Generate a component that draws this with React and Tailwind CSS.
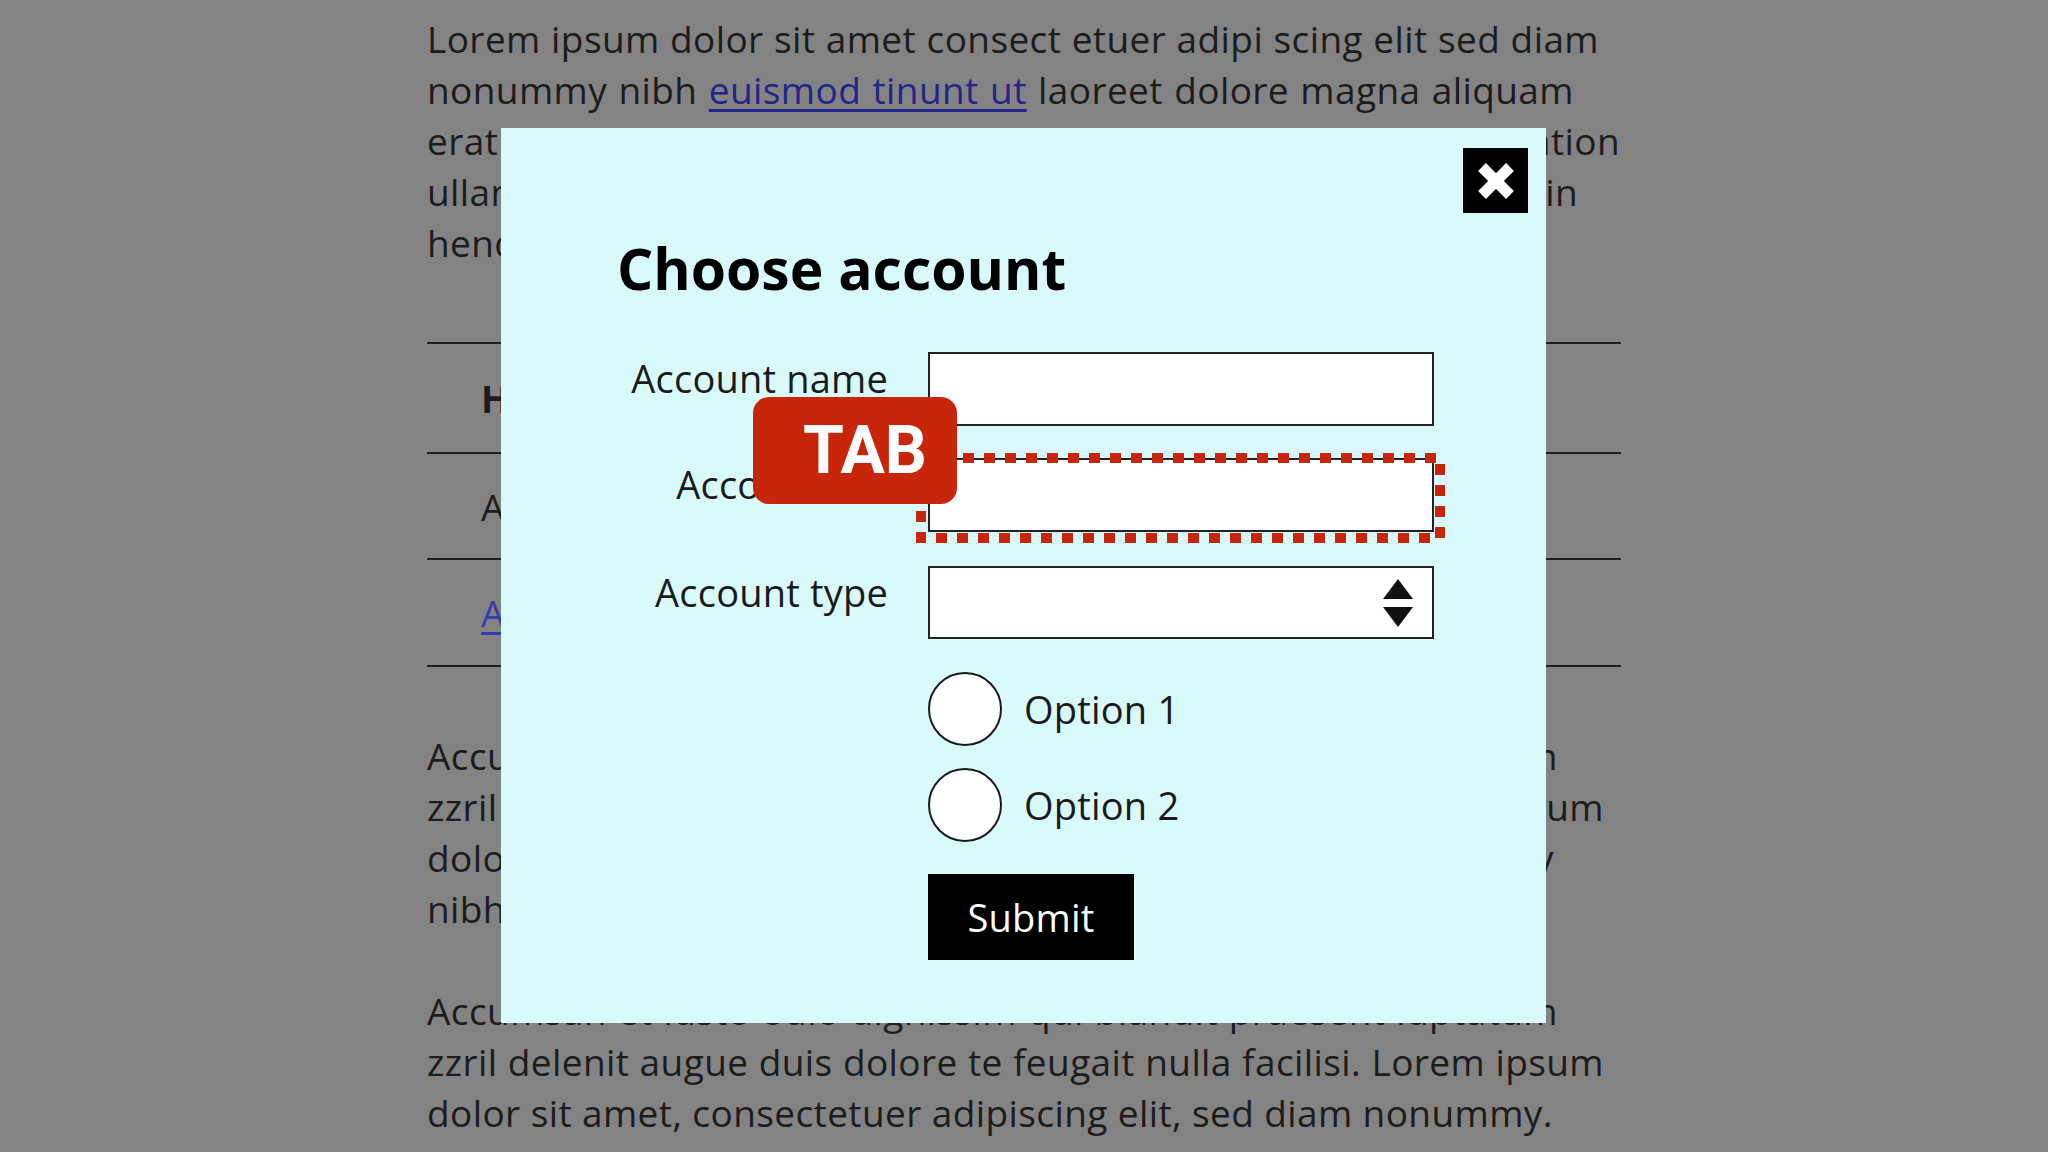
import React from "react";

const line = "whitespace-nowrap [text-align-last:justify]";

function CloseIcon() {
  return (
    <svg viewBox="0 0 40 40" className="h-[40px] w-[40px]">
      <path d="M6 6 L34 34 M34 6 L6 34" stroke="white" strokeWidth="11" strokeLinecap="butt" />
    </svg>
  );
}

function SelectArrows() {
  return (
    <svg viewBox="0 0 30 48" className="h-[48px] w-[30px]">
      <polygon points="15,0 30,20 0,20" fill="#111" />
      <polygon points="0,28 30,28 15,48" fill="#111" />
    </svg>
  );
}

function Radio({ label }) {
  return (
    <label className="flex items-center gap-[22px]">
      <span className="h-[74px] w-[74px] rounded-full border-2 border-[#1a1a1a] bg-white" />
      <span className="leading-none">{label}</span>
    </label>
  );
}

export default function App() {
  return (
    <div className="relative h-[1152px] w-full overflow-hidden bg-[#838383] font-['Open_Sans',sans-serif] text-[#1c1c1c]">
      {/* page behind the dialog */}
      <div className="pl-[427px] pt-[13px] text-[37px] leading-[51px] tracking-[0.4px]">
        <p className={`w-[1172px] ${line}`}>Lorem ipsum dolor sit amet consect etuer adipi scing elit sed diam</p>
        <p className={`w-[1147px] ${line}`}>
          nonummy nibh <a className="text-[#23238c] underline underline-offset-[5px]">euismod tinunt ut</a> laoreet dolore magna aliquam
        </p>
        <p className={`w-[1193px] ${line}`}>erat volutpat. Ut wisi enim ad minim veniam, exerci tation</p>
        <p className={`w-[1151px] ${line}`}>ullamcorper suscipit lobortis nisl ut aliquip ex ea in</p>
        <p className="whitespace-nowrap">hendrerit in vulputate velit esse molestie.</p>

        <div className="mt-[74px] w-[1194px] border-b-2 border-[#1e1e1e]">
          <div className="flex h-[110px] items-center border-t-2 border-[#1e1e1e] pl-[54px] font-bold">Heading</div>
          <div className="flex h-[106px] items-center border-t-2 border-[#1e1e1e] pl-[54px]">Account</div>
          <div className="flex h-[107px] items-center border-t-2 border-[#1e1e1e] pl-[54px]">
            <a className="text-[#3a3ab0] underline underline-offset-[5px]">Account link</a>
          </div>
        </div>

        <div className="mt-[63px]">
          <p className={`w-[1131px] ${line}`}>Accumsan et iusto odio dignissim qui blandit praesent luptatum</p>
          <p className={`w-[1177px] ${line}`}>zzril delenit augue duis dolore te feugait nulla facilisi. Lorem ipsum</p>
          <p className={`w-[1127px] ${line}`}>dolor sit amet, consectetuer adipiscing elit, sed diam nonummy</p>
          <p className="whitespace-nowrap">nibh euismod tincidunt ut laoreet.</p>
        </div>
        <div className="mt-[51px]">
          <p className={`w-[1131px] ${line}`}>Accumsan et iusto odio dignissim qui blandit praesent luptatum</p>
          <p className={`w-[1177px] ${line}`}>zzril delenit augue duis dolore te feugait nulla facilisi. Lorem ipsum</p>
          <p className="whitespace-nowrap">dolor sit amet, consectetuer adipiscing elit, sed diam nonummy.</p>
        </div>
      </div>

      {/* dialog */}
      <div className="absolute left-[501px] top-[128px] h-[895px] w-[1045px] bg-[#d8fafa] pl-[116px] pt-[112px]">
        <button className="absolute right-[18px] top-[20px] flex h-[65px] w-[65px] items-center justify-center bg-black">
          <CloseIcon />
        </button>

        <h1 className="text-[57px] font-bold leading-none text-black">Choose account</h1>

        <form className="mt-[55px] grid grid-cols-[271px_506px] gap-x-[40px] text-[38px] tracking-[0.2px] text-[#1a1a1a]">
          <span className="mt-[5px] text-right leading-[42px]">Account name</span>
          <input className="h-[74px] border-2 border-[#222] bg-white" />

          <span className="mt-[37px] text-right leading-[42px]">Account no.</span>
          <div className="relative mt-[32px]">
            <input className="block h-[74px] w-full border-2 border-[#222] bg-white" />
            <svg className="absolute -left-[12px] -top-[5px] h-[90px] w-[529px]" viewBox="0 0 529 90">
              <rect x="5" y="5" width="519" height="80" fill="none" stroke="#c8260a" strokeWidth="10" strokeDasharray="11 10" />
            </svg>
          </div>

          <span className="mt-[39px] text-right leading-[42px]">Account type</span>
          <div className="mt-[34px] flex h-[73px] items-center justify-end border-2 border-[#222] bg-white pr-[19px]">
            <SelectArrows />
          </div>

          <div className="col-start-2 mt-[33px] flex flex-col gap-[22px]">
            <Radio label="Option 1" />
            <Radio label="Option 2" />
          </div>

          <div className="col-start-2 mt-[32px]">
            <button type="button" className="h-[86px] w-[206px] bg-black text-white">
              Submit
            </button>
          </div>
        </form>

        <div className="absolute left-[252px] top-[269px] flex h-[107px] w-[204px] items-center rounded-[16px] bg-[#c8260a] pl-[50px] font-['Roboto',sans-serif] text-[66px] font-bold leading-none text-white">
          TAB
        </div>
      </div>
    </div>
  );
}
